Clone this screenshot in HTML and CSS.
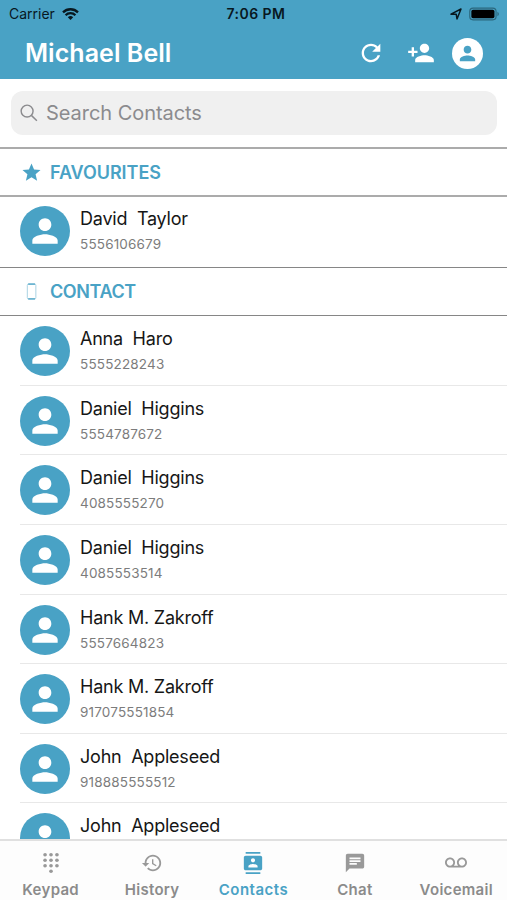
FILE: index.html
```
<!DOCTYPE html>
<html lang="en">
<head>
<meta charset="utf-8">
<title>Contacts</title>
<link rel="stylesheet" href="styles.css">
</head>
<body>
<svg class="defs" aria-hidden="true">
  <symbol id="person" viewBox="0 0 24 24"><path d="M12 12c2.21 0 4-1.79 4-4s-1.79-4-4-4-4 1.790-4 4 1.790 4 4 4zm0 2c-2.670 0-8 1.340-8 4v2h16v-2c0-2.660-5.330-4-8-4z"/></symbol>
</svg>
<div class="phone">
  <header class="header">
    <div class="status">
      <div class="carrier"><span>Carrier</span>
        <svg class="wifi" viewBox="0 0 17 12"><g fill="none" stroke="#08181f" stroke-width="2.300"><path d="M1 4.300a10.800 10.800 0 0 1 15 0"/><path d="M3.600 7.300a6.800 6.800 0 0 1 9.800 0"/></g><path fill="#08181f" d="M5.800 9.200a4 4 0 0 1 5.400 0L8.500 12z"/></svg>
      </div>
      <div class="time">7:06 PM</div>
      <div class="power">
        <svg class="arrow" viewBox="0 0 12 12"><path d="M1 6.200 11 1 7 11 6.200 6.200z" fill="none" stroke="#08181f" stroke-width="1.500" stroke-linejoin="round"/></svg>
        <svg class="battery" viewBox="0 0 33 14"><rect x=".8" y=".8" width="28" height="12.400" rx="3.500" fill="none" stroke="#2b677d" stroke-width="1.200"/><rect x="2.500" y="2.500" width="24.600" height="9" rx="1.800"/><path d="M30.300 4.700c2 .8 2 3.800 0 4.600z" fill="#2b677d"/></svg>
      </div>
    </div>
    <div class="titlebar">
      <h1>Michael Bell</h1>
      <svg class="refresh" viewBox="0 0 24 24"><path d="M17.650 6.350C16.200 4.900 14.210 4 12 4c-4.420 0-7.990 3.580-7.990 8s3.570 8 7.990 8c3.730 0 6.840-2.550 7.730-6h-2.080c-.82 2.330-3.040 4-5.650 4-3.310 0-6-2.690-6-6s2.690-6 6-6c1.660 0 3.140.69 4.220 1.780L13 11h7V4l-2.350 2.350z"/></svg>
      <svg class="add" viewBox="0 0 24 24"><path d="M15 12c2.210 0 4-1.790 4-4s-1.790-4-4-4-4 1.790-4 4 1.790 4 4 4zm-9-2V7H4v3H1v2h3v3h2v-3h3v-2H6zm9 4c-2.670 0-8 1.340-8 4v2h16v-2c0-2.660-5.330-4-8-4z"/></svg>
      <div class="me"><svg viewBox="0 0 24 24"><use href="#person"/></svg></div>
    </div>
  </header>

  <div class="search">
    <svg viewBox="0 0 19 19"><circle cx="7.500" cy="7.500" r="6.300"/><path d="m12 12 5.800 5.600"/></svg>
    <span>Search Contacts</span>
  </div>

  <main class="list">
    <h2 class="section"><svg class="star" viewBox="0 0 20 19"><path d="M10 0l2.700 6.300 6.800.6-5.200 4.500 1.600 6.700-5.900-3.600-5.900 3.600 1.600-6.700L.5 6.900l6.800-.6z"/></svg><span class="fav">FAVOURITES</span></h2>
    <div class="row only"><div class="avatar"><svg viewBox="0 0 24 24"><use href="#person"/></svg></div><div class="info"><p class="name">David  Taylor</p><p class="number">5556106679</p></div></div>
    <h2 class="section thin"><svg class="mobile" viewBox="0 0 20 19"><rect x="5.600" y="1.500" width="9" height="16" rx="1.500"/><path class="caps" d="M6.500 1.700h7.200M6.500 17.300h7.200"/></svg><span class="con">CONTACT</span></h2>
    <div class="row"><div class="avatar"><svg viewBox="0 0 24 24"><use href="#person"/></svg></div><div class="info"><p class="name">Anna  Haro</p><p class="number">5555228243</p></div></div>
    <div class="row"><div class="avatar"><svg viewBox="0 0 24 24"><use href="#person"/></svg></div><div class="info"><p class="name">Daniel  Higgins</p><p class="number">5554787672</p></div></div>
    <div class="row"><div class="avatar"><svg viewBox="0 0 24 24"><use href="#person"/></svg></div><div class="info"><p class="name">Daniel  Higgins</p><p class="number">4085555270</p></div></div>
    <div class="row"><div class="avatar"><svg viewBox="0 0 24 24"><use href="#person"/></svg></div><div class="info"><p class="name">Daniel  Higgins</p><p class="number">4085553514</p></div></div>
    <div class="row"><div class="avatar"><svg viewBox="0 0 24 24"><use href="#person"/></svg></div><div class="info"><p class="name">Hank M. Zakroff</p><p class="number">5557664823</p></div></div>
    <div class="row"><div class="avatar"><svg viewBox="0 0 24 24"><use href="#person"/></svg></div><div class="info"><p class="name">Hank M. Zakroff</p><p class="number">917075551854</p></div></div>
    <div class="row"><div class="avatar"><svg viewBox="0 0 24 24"><use href="#person"/></svg></div><div class="info"><p class="name">John  Appleseed</p><p class="number">918885555512</p></div></div>
    <div class="row"><div class="avatar"><svg viewBox="0 0 24 24"><use href="#person"/></svg></div><div class="info"><p class="name">John  Appleseed</p></div></div>
  </main>

  <nav class="tabs">
    <div class="tab"><svg viewBox="0 0 24 24"><g><circle cx="5.500" cy="3" r="2"/><circle cx="12" cy="3" r="2"/><circle cx="18.500" cy="3" r="2"/><circle cx="5.500" cy="9" r="2"/><circle cx="12" cy="9" r="2"/><circle cx="18.500" cy="9" r="2"/><circle cx="5.500" cy="15" r="2"/><circle cx="12" cy="15" r="2"/><circle cx="18.500" cy="15" r="2"/><circle cx="12" cy="21" r="2"/></g></svg><span>Keypad</span></div>
    <div class="tab"><svg viewBox="0 0 24 24"><path d="M13 3c-4.970 0-9 4.030-9 9H1l3.890 3.890.07.14L9 12H6c0-3.870 3.130-7 7-7s7 3.130 7 7-3.130 7-7 7c-1.930 0-3.680-.79-4.940-2.060l-1.420 1.420C8.270 19.990 10.510 21 13 21c4.970 0 9-4.030 9-9s-4.030-9-9-9zm-1 5v5l4.280 2.540.72-1.210-3.500-2.080V8H12z"/></svg><span>History</span></div>
    <div class="tab active"><svg viewBox="0 0 24 24"><path d="M20 0H4v2h16V0zM4 24h16v-2H4v2zM20 4H4c-1.100 0-2 .9-2 2v12c0 1.100.9 2 2 2h16c1.100 0 2-.9 2-2V6c0-1.100-.9-2-2-2zm-8 2.750c1.240 0 2.250 1.010 2.250 2.250s-1.010 2.250-2.250 2.250S9.750 10.240 9.750 9 10.760 6.750 12 6.750zM17 17H7v-1.500c0-1.670 3.330-2.500 5-2.500s5 .83 5 2.500V17z"/></svg><span>Contacts</span></div>
    <div class="tab"><svg viewBox="0 0 24 24"><path d="M20 2H4c-1.100 0-1.990.9-1.990 2L2 22l4-4h14c1.100 0 2-.9 2-2V4c0-1.100-.9-2-2-2zM6 9h12v2H6V9zm8 5H6v-2h8v2zm4-6H6V6h12v2z"/></svg><span>Chat</span></div>
    <div class="tab"><svg viewBox="0 0 24 24"><path d="M18.500 6C15.460 6 13 8.460 13 11.500c0 1.330.47 2.550 1.260 3.500H9.740c.79-.95 1.260-2.170 1.260-3.500C11 8.460 8.540 6 5.500 6S0 8.460 0 11.500 2.460 17 5.500 17h13c3.040 0 5.500-2.460 5.500-5.500S21.540 6 18.500 6zm-13 9C3.570 15 2 13.430 2 11.500S3.570 8 5.500 8 9 9.570 9 11.500 7.430 15 5.500 15zm13 0c-1.930 0-3.500-1.570-3.500-3.500S16.570 8 18.500 8 22 9.570 22 11.500 20.430 15 18.500 15z"/></svg><span>Voicemail</span></div>
  </nav>
</div>
</body>
</html>
```

FILE: styles.css
```
* { box-sizing: border-box; margin: 0; padding: 0; }
body { font-family: Inter, "Liberation Sans", sans-serif; background: #fff; }
svg { display: block; flex: none; }
.defs { display: none; }
.phone { width: 507px; height: 900px; display: flex; flex-direction: column; overflow: hidden; }

.header { height: 79px; flex: none; background: #49a2c5; }
.status { height: 27px; display: grid; grid-template-columns: 1fr auto 1fr; align-items: center; padding: 0 7px 0 9px; color: #08181f; font-size: 14px; line-height: 27px; }
.carrier { display: flex; align-items: center; gap: 7px; letter-spacing: 0; }
.wifi { width: 17px; height: 12px; }
.time { font-weight: 600; letter-spacing: .45px; padding-left: 3px; }
.power { display: flex; align-items: center; justify-content: flex-end; gap: 7px; }
.arrow { width: 12px; height: 12px; }
.battery { width: 31px; height: 14px; }
.titlebar { height: 52px; display: flex; align-items: center; padding: 0 24px 0 25px; }
h1 { flex: 1; font-size: 25px; font-weight: 600; letter-spacing: .05px; color: #fff; line-height: 52px; }
.titlebar svg { fill: #fff; }
.refresh { width: 28px; height: 28px; margin-right: 22px; }
.add { width: 28px; height: 28px; margin-right: 17px; }
.me { width: 31px; height: 31px; border-radius: 50%; background: #fff; display: flex; align-items: center; justify-content: center; }
.me svg { width: 23px; height: 23px; fill: #49a2c5; }

.search { height: 44px; flex: none; margin: 12px 10px 12px 11px; border-radius: 12px; background: #f0f0f0; display: flex; align-items: center; gap: 8px; padding-left: 9px; color: #8b8b8e; font-size: 20px; letter-spacing: -.05px; }
.search svg { width: 18px; height: 18px; fill: none; stroke: #8b8b8e; stroke-width: 1.500; }

.list { flex: 1; min-height: 0; overflow: hidden; }
.section { height: 50px; border-top: 2px solid #ababab; border-bottom: 2px solid #ababab; display: flex; align-items: center; gap: 9px; padding-left: 22px; font-size: 18px; font-weight: 600; color: #49a2c5; }
.section.thin { height: 49px; border-width: 1px; border-color: #868686; }
.fav { letter-spacing: -.05px; }
.con { letter-spacing: -.4px; }
.section svg { width: 19px; height: 19px; fill: #49a2c5; }
.section .mobile { fill: none; stroke: #a5d1e2; stroke-width: 1; }
.mobile .caps { stroke: #49a2c5; stroke-width: 1.400; }
.row { height: 69.650px; display: flex; margin-left: 20px; padding-top: 10px; gap: 10px; border-bottom: 1px solid #e8e8e8; }
.row.only { height: 70px; padding-top: 9px; border-bottom: 0; }
.avatar { width: 50px; height: 50px; flex: none; border-radius: 50%; background: #49a2c5; display: flex; align-items: center; justify-content: center; }
.avatar svg { width: 38px; height: 38px; fill: #fff; }
.name { white-space: pre; font-size: 18px; line-height: 26px; letter-spacing: -.22px; color: #161616; }
.number { font-size: 13.500px; line-height: 24px; letter-spacing: .17px; color: #7c7c7c; }

.tabs { height: 61px; flex: none; display: grid; grid-template-columns: repeat(5, 1fr); border-top: 2px solid #e0e0e0; background: #fdfdfd; }
.tab { display: flex; flex-direction: column; align-items: center; padding-top: 11px; gap: 6px; color: #8b8b8b; fill: #999; font-size: 15px; font-weight: 600; line-height: 20px; letter-spacing: .3px; }
.tab svg { width: 22px; height: 22px; }
.active { color: #49a2c5; fill: #49a2c5; letter-spacing: .5px; }
```
